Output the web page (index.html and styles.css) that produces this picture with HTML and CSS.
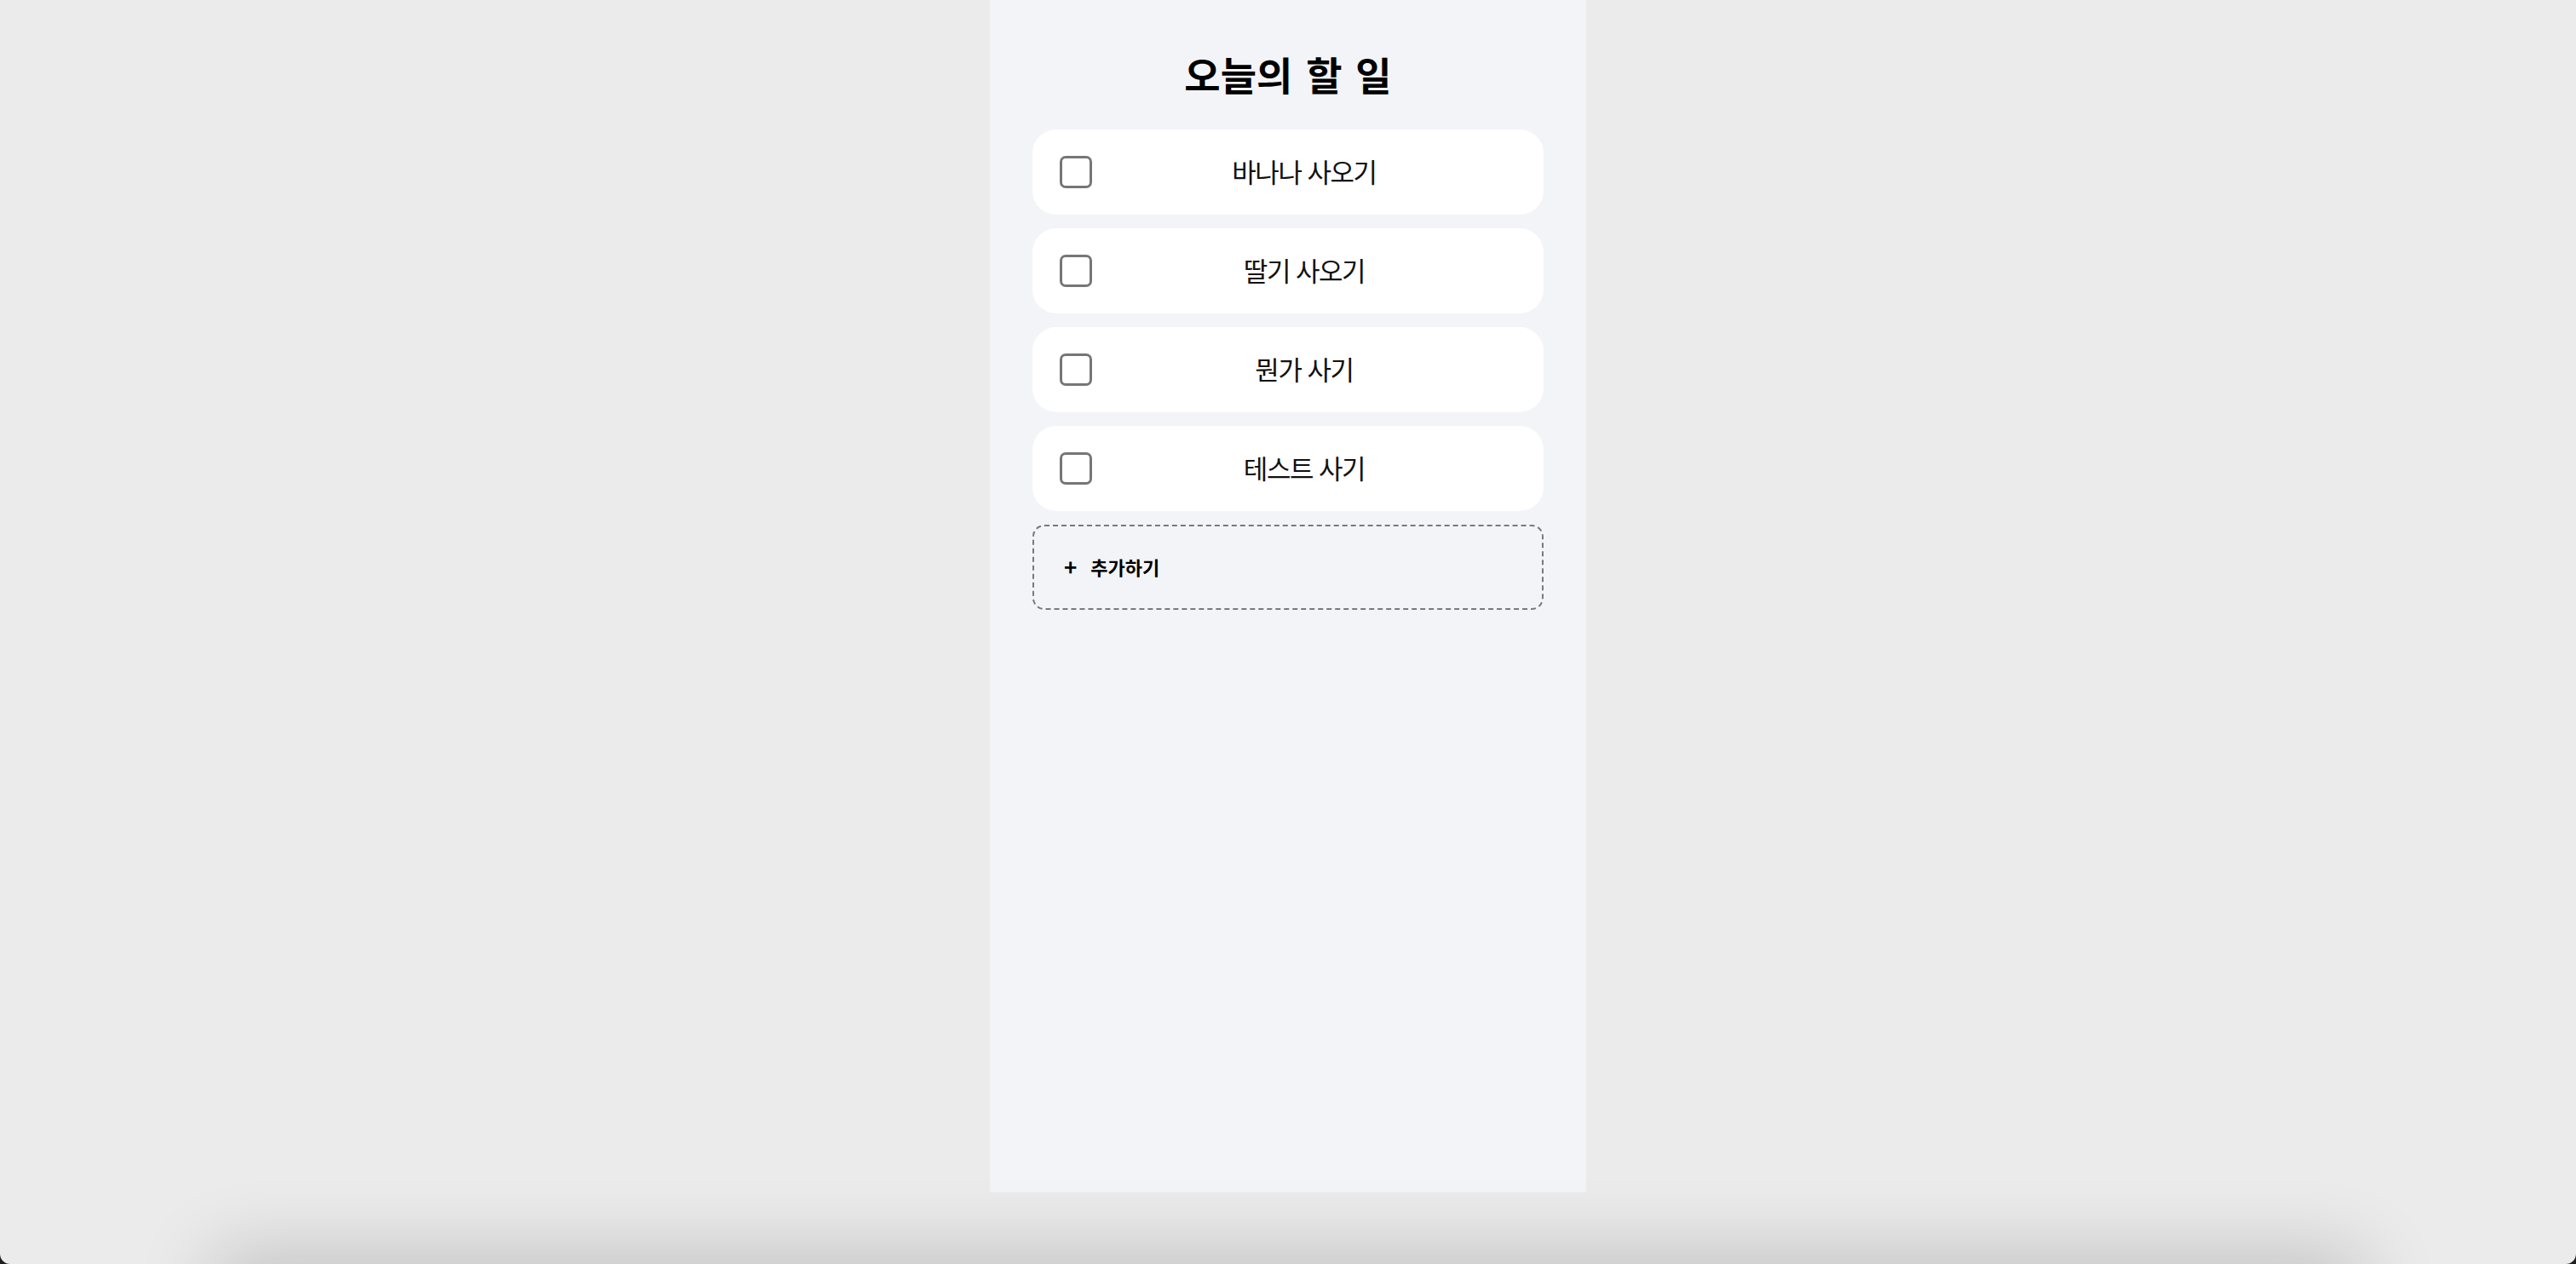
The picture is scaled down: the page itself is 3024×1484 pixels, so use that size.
FILE: index.html
```html
<!DOCTYPE html>
<html lang="ko">
<head>
    <meta charset="UTF-8">
    <meta name="viewport" content="width=device-width, initial-scale=1.0">
    <title>오늘의 할 일</title>
    <link rel="stylesheet" href="styles.css">
</head>
<body>

<div class="screen">
    <div class="app">
        <h1 class="title">오늘의 할 일</h1>

        <ul class="todo-list">
            <li class="todo-item">
                <span class="checkbox"></span>
                <span class="todo-text">바나나 사오기</span>
            </li>
            <li class="todo-item">
                <span class="checkbox"></span>
                <span class="todo-text">딸기 사오기</span>
            </li>
            <li class="todo-item">
                <span class="checkbox"></span>
                <span class="todo-text">뭔가 사기</span>
            </li>
            <li class="todo-item">
                <span class="checkbox"></span>
                <span class="todo-text">테스트 사기</span>
            </li>
        </ul>

        <button class="add-button">
            <span class="plus">+</span>
            <span class="add-text">추가하기</span>
        </button>
    </div>
</div>

</body>
</html>
```

FILE: styles.css
```css
html, body {
    margin: 0;
    height: 100%;
}

body {
    background-color: #1d1f24;
    font-family: "Noto Sans CJK KR", "Noto Sans", sans-serif;
    overflow: hidden;
}

.screen {
    position: relative;
    height: 1484px;
    background-color: #ebebeb;
    border-radius: 0 0 12px 12px;
    overflow: hidden;
}

/* 아래쪽 그림자 */
.screen::after {
    content: "";
    position: absolute;
    left: 260px;
    right: 260px;
    bottom: -60px;
    height: 60px;
    box-shadow: 0 0 90px 10px rgba(0, 0, 0, 0.2);
}

.app {
    width: 700px;
    height: 1400px;
    margin: 0 auto;
    padding: 0 50px;
    box-sizing: border-box;
    background-color: #f3f4f8;
}

.title {
    margin: 0;
    padding-top: 56px;
    font-size: 46px;
    font-weight: 700;
    line-height: 60px;
    word-spacing: 3px;
    text-align: center;
    color: #000;
}

.todo-list {
    list-style: none;
    margin: 36px 0 0;
    padding: 0;
    display: flex;
    flex-direction: column;
    gap: 16px;
}

.todo-item {
    display: flex;
    align-items: center;
    height: 100px;
    padding: 0 32px;
    background-color: #fff;
    border-radius: 28px;
}

.checkbox {
    width: 38px;
    height: 38px;
    box-sizing: border-box;
    border: 3px solid #767676;
    border-radius: 7px;
    flex-shrink: 0;
}

.todo-text {
    flex: 1;
    padding-bottom: 4px;
    text-align: center;
    font-size: 31px;
    letter-spacing: -1.5px;
    color: #111;
}

.add-button {
    display: flex;
    align-items: center;
    width: 100%;
    height: 100px;
    margin-top: 16px;
    padding: 0 0 2px 35px;
    background-color: transparent;
    border: 2px dashed #7a7a7a;
    border-radius: 14px;
    font-family: inherit;
    color: #000;
    cursor: pointer;
}

.plus {
    font-size: 26px;
    font-weight: 700;
    line-height: 1;
    margin-right: 16px;
}

.add-text {
    font-size: 22px;
    font-weight: 700;
}
```
